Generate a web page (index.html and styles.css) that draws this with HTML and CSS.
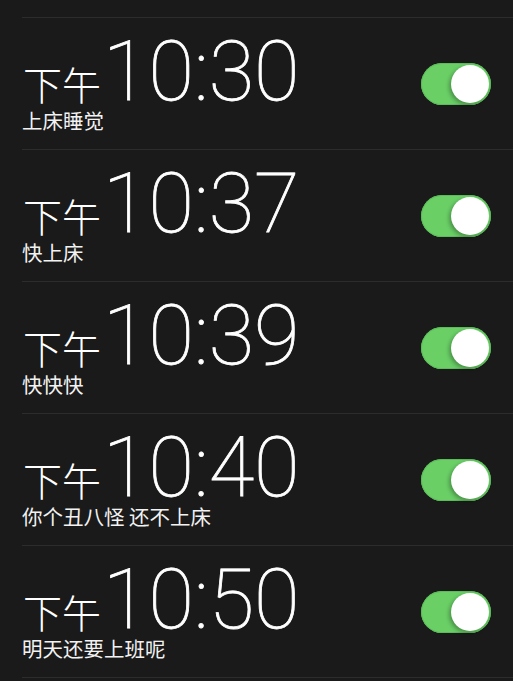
FILE: index.html
```html
<!DOCTYPE html>
<html lang="zh-CN">
<head>
<meta charset="utf-8">
<title>闹钟</title>
<link rel="stylesheet" href="styles.css">
</head>
<body>
<ul class="alarms">
  <li class="alarm">
    <div class="info">
      <div class="time"><span class="period">下午</span><span class="clock">10:30</span></div>
      <div class="label">上床睡觉</div>
    </div>
    <span class="switch on"><span class="knob"></span></span>
  </li>
  <li class="alarm">
    <div class="info">
      <div class="time"><span class="period">下午</span><span class="clock">10:37</span></div>
      <div class="label">快上床</div>
    </div>
    <span class="switch on"><span class="knob"></span></span>
  </li>
  <li class="alarm">
    <div class="info">
      <div class="time"><span class="period">下午</span><span class="clock">10:39</span></div>
      <div class="label">快快快</div>
    </div>
    <span class="switch on"><span class="knob"></span></span>
  </li>
  <li class="alarm">
    <div class="info">
      <div class="time"><span class="period">下午</span><span class="clock">10:40</span></div>
      <div class="label">你个丑八怪 还不上床</div>
    </div>
    <span class="switch on"><span class="knob"></span></span>
  </li>
  <li class="alarm">
    <div class="info">
      <div class="time"><span class="period">下午</span><span class="clock">10:50</span></div>
      <div class="label">明天还要上班呢</div>
    </div>
    <span class="switch on"><span class="knob"></span></span>
  </li>
</ul>
</body>
</html>
```
FILE: styles.css
```css
html, body {
  margin: 0;
  padding: 0;
  background: #1a1a1a;
  height: 100%;
  overflow: hidden;
}
body {
  font-family: "Noto Sans CJK SC", "Noto Sans", sans-serif;
  color: #ffffff;
}
.alarms {
  list-style: none;
  margin: 0;
  padding: 17px 0 0 22px;
}
.alarm {
  display: flex;
  align-items: center;
  justify-content: space-between;
  height: 131px;
  border-top: 1px solid #2c2c2c;
  padding: 0 22px 0 1px;
}
.alarm:last-child {
  border-bottom: 1px solid #2c2c2c;
}
.info {
  display: flex;
  flex-direction: column;
}
.time {
  display: flex;
  align-items: baseline;
  line-height: 72px;
  height: 72px;
}
.period {
  font-family: "Noto Sans CJK SC", sans-serif;
  font-weight: 300;
  font-size: 39px;
}
.clock {
  font-family: Roboto, "Liberation Sans", sans-serif;
  font-weight: 100;
  font-size: 83px;
  letter-spacing: 0;
  margin-left: 2px;
  -webkit-text-stroke: 0.8px #ffffff;
}
.label {
  font-size: 20.5px;
  line-height: 24px;
  font-weight: 400;
  color: #f2f2f2;
  margin-left: -1px;
}
.switch {
  position: relative;
  display: block;
  width: 70px;
  height: 42px;
  border-radius: 21px;
  background: #6ad066;
  box-shadow: inset 0 0 0 1px #5cbc59;
  flex: none;
}
.knob {
  position: absolute;
  top: 2px;
  right: 2px;
  width: 38px;
  height: 38px;
  border-radius: 50%;
  background: #ffffff;
  box-shadow: -2px 2px 4px rgba(0, 0, 0, 0.3);
}
```
